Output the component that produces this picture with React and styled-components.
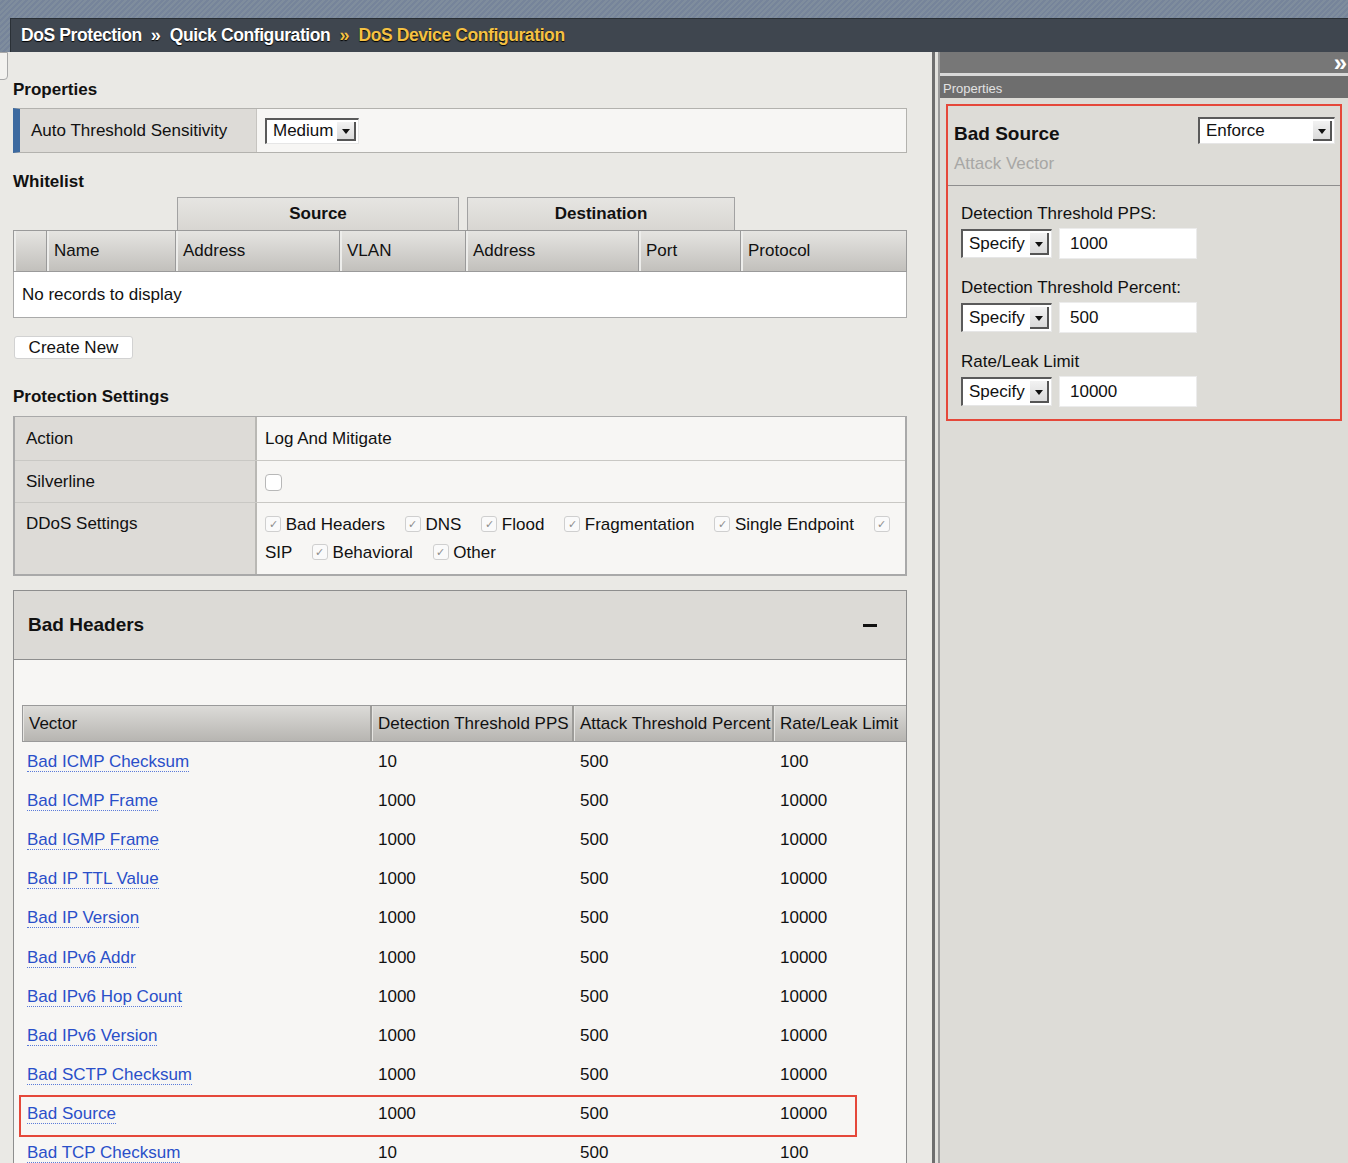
import React from "react";
import styled, { createGlobalStyle } from "styled-components";

const GlobalStyle = createGlobalStyle`
  html, body { margin: 0; padding: 0; }
  body {
    font-family: "Liberation Sans", Arial, sans-serif;
    font-size: 17px;
    color: #111;
    background: #eae9e5;
  }
  * { box-sizing: border-box; }
`;

const vectors = [
  { name: "Bad ICMP Checksum", pps: "10", pct: "500", rate: "100" },
  { name: "Bad ICMP Frame", pps: "1000", pct: "500", rate: "10000" },
  { name: "Bad IGMP Frame", pps: "1000", pct: "500", rate: "10000" },
  { name: "Bad IP TTL Value", pps: "1000", pct: "500", rate: "10000" },
  { name: "Bad IP Version", pps: "1000", pct: "500", rate: "10000" },
  { name: "Bad IPv6 Addr", pps: "1000", pct: "500", rate: "10000" },
  { name: "Bad IPv6 Hop Count", pps: "1000", pct: "500", rate: "10000" },
  { name: "Bad IPv6 Version", pps: "1000", pct: "500", rate: "10000" },
  { name: "Bad SCTP Checksum", pps: "1000", pct: "500", rate: "10000" },
  { name: "Bad Source", pps: "1000", pct: "500", rate: "10000", selected: true },
  { name: "Bad TCP Checksum", pps: "10", pct: "500", rate: "100" },
];

const ddos = ["Bad Headers", "DNS", "Flood", "Fragmentation", "Single Endpoint", "SIP", "Behavioral", "Other"];

const fields = [
  { label: "Detection Threshold PPS:", value: "1000" },
  { label: "Detection Threshold Percent:", value: "500" },
  { label: "Rate/Leak Limit", value: "10000" },
];

export default function App() {
  return (
    <Page>
      <GlobalStyle />
      <Header>
        <Crumbs>
          <span>DoS Protection</span>
          <Sep>»</Sep>
          <span>Quick Configuration</span>
          <Sep $current>»</Sep>
          <Current>DoS Device Configuration</Current>
        </Crumbs>
      </Header>

      <Body>
        <LeftPane>
          <Handle />
          <Heading $top={1} $bottom={8}>Properties</Heading>
          <AutoRow>
            <LabelCell>Auto Threshold Sensitivity</LabelCell>
            <ValueCell>
              <Select $w={94} $h={26}>
                <SelectText>Medium</SelectText>
                <SelectArrow />
              </Select>
            </ValueCell>
          </AutoRow>

          <Heading $top={19} $bottom={5}>Whitelist</Heading>
          <GroupRow>
            <GroupCell $left={164} $w={282}>Source</GroupCell>
            <GroupCell $left={8} $w={268}>Destination</GroupCell>
          </GroupRow>
          <ColHeader>
            <span />
            <span>Name</span>
            <span>Address</span>
            <span>VLAN</span>
            <span>Address</span>
            <span>Port</span>
            <span>Protocol</span>
          </ColHeader>
          <EmptyRow>No records to display</EmptyRow>

          <Button>Create New</Button>

          <Heading $top={28} $bottom={9}>Protection Settings</Heading>
          <SettingsTable>
            <SettingsRow $h={43}>
              <SettingsLabel>Action</SettingsLabel>
              <SettingsValue>Log And Mitigate</SettingsValue>
            </SettingsRow>
            <SettingsRow $h={42}>
              <SettingsLabel>Silverline</SettingsLabel>
              <SettingsValue>
                <EmptyBox />
              </SettingsValue>
            </SettingsRow>
            <SettingsRow $h={72}>
              <SettingsLabel $top>DDoS Settings</SettingsLabel>
              <DdosValue>
                {ddos.map((d, i) => (
                  <React.Fragment key={d}>
                    {i > 0 && " "}
                    <Check $first={i === 0}>✓</Check> {d}
                  </React.Fragment>
                ))}
              </DdosValue>
            </SettingsRow>
          </SettingsTable>

          <Panel>
            <PanelHead>
              <span>Bad Headers</span>
              <Minus />
            </PanelHead>
            <PanelBody>
              <VecHeader>
                <span>Vector</span>
                <span>Detection Threshold PPS</span>
                <span>Attack Threshold Percent</span>
                <span>Rate/Leak Limit</span>
              </VecHeader>
              {vectors.map((v) => (
                <VecRow key={v.name} $selected={v.selected}>
                  <span><VecLink>{v.name}</VecLink></span>
                  <span>{v.pps}</span>
                  <span>{v.pct}</span>
                  <span>{v.rate}</span>
                </VecRow>
              ))}
            </PanelBody>
          </Panel>
        </LeftPane>

        <Divider />

        <RightPane>
          <TopBar>»</TopBar>
          <PropsBand>Properties</PropsBand>
          <RightContent>
            <RedBox>
              <BoxHead>
                <div>
                  <BoxTitle>Bad Source</BoxTitle>
                  <BoxSub>Attack Vector</BoxSub>
                </div>
                <Select $w={137} $h={27}>
                  <SelectText>Enforce</SelectText>
                  <SelectArrow />
                </Select>
              </BoxHead>
              <BoxFields>
                {fields.map((f) => (
                  <Field key={f.label}>
                    <FieldLabel>{f.label}</FieldLabel>
                    <FieldRow>
                      <Select $w={91} $h={29}>
                        <SelectText>Specify</SelectText>
                        <SelectArrow />
                      </Select>
                      <TextInput>{f.value}</TextInput>
                    </FieldRow>
                  </Field>
                ))}
              </BoxFields>
            </RedBox>
          </RightContent>
        </RightPane>
      </Body>
    </Page>
  );
}

const Page = styled.div`
  width: 1348px;
  height: 1163px;
  overflow: hidden;
  display: flex;
  flex-direction: column;
`;

const Header = styled.div`
  flex-shrink: 0;
  padding: 18px 0 0 10px;
  background: repeating-linear-gradient(135deg, #7f8d9d 0 2px, #76849a 2px 4px);
`;

const Crumbs = styled.div`
  height: 34px;
  display: flex;
  align-items: center;
  gap: 9px;
  padding-left: 10px;
  background: #3f464f;
  border-top: 1px solid #2a3036;
  border-left: 1px solid #2a3036;
  color: #fff;
  font-size: 17.5px;
  font-weight: bold;
  letter-spacing: -0.4px;
  text-shadow: 0 1px 1px #000;
`;

const Sep = styled.span`
  color: ${(p) => (p.$current ? "#f5c142" : "#fff")};
  font-size: 18px;
  letter-spacing: 0;
`;

const Current = styled.span`
  color: #f5c142;
`;

const Body = styled.div`
  flex: 1;
  display: flex;
  min-height: 0;
`;

const LeftPane = styled.div`
  position: relative;
  width: 932px;
  padding: 27px 25px 0 13px;
  background: #eae9e5;
  overflow: hidden;
`;

const Handle = styled.div`
  position: absolute;
  left: -4px;
  top: 0;
  width: 12px;
  height: 28px;
  background: #f3f2ef;
  border: 1px solid #a8a8a8;
  border-radius: 0 0 4px 0;
`;

const Heading = styled.div`
  font-weight: bold;
  line-height: 20px;
  margin-top: ${(p) => p.$top}px;
  margin-bottom: ${(p) => p.$bottom}px;
`;

const AutoRow = styled.div`
  display: flex;
  height: 45px;
  border: 1px solid #b3b2ae;
  border-left: 7px solid #3d6aa0;
`;

const LabelCell = styled.div`
  width: 237px;
  display: flex;
  align-items: center;
  padding-left: 11px;
  background: #dddbd7;
  border-right: 1px solid #c6c4c0;
`;

const ValueCell = styled.div`
  flex: 1;
  display: flex;
  align-items: center;
  padding-left: 8px;
  background: #f7f6f4;
`;

const Select = styled.div`
  display: inline-flex;
  flex-shrink: 0;
  width: ${(p) => p.$w}px;
  height: ${(p) => p.$h}px;
  background: #fff;
  border-top: 2px solid #5a5a5a;
  border-left: 2px solid #5a5a5a;
  border-right: 1px solid #e6e6e6;
  border-bottom: 1px solid #e6e6e6;
  font-size: 17px;
  color: #111;
`;

const SelectText = styled.span`
  flex: 1;
  display: flex;
  align-items: center;
  padding-left: 6px;
`;

const SelectArrow = styled.span`
  width: 19px;
  margin: 2px 2px 2px 0;
  display: flex;
  align-items: center;
  justify-content: center;
  background: linear-gradient(#f2f2f2, #dadada);
  border-right: 2px solid #555;
  border-bottom: 2px solid #555;
  &::after {
    content: "";
    border-left: 4px solid transparent;
    border-right: 4px solid transparent;
    border-top: 5px solid #111;
    margin-top: 2px;
  }
`;

const GroupRow = styled.div`
  display: flex;
  height: 33px;
`;

const GroupCell = styled.div`
  width: ${(p) => p.$w}px;
  margin-left: ${(p) => p.$left}px;
  display: flex;
  align-items: center;
  justify-content: center;
  font-weight: bold;
  background: linear-gradient(#e6e5e2, #d8d6d2);
  border: 1px solid #a2a2a2;
  border-bottom: none;
`;

const ColHeader = styled.div`
  display: grid;
  grid-template-columns: 33px 129px 164px 126px 173px 102px 1fr;
  height: 42px;
  border: 1px solid #9a9a9a;
  background: linear-gradient(#e5e4e1, #c2c0bc);
  span {
    display: flex;
    align-items: center;
    padding-left: 7px;
    border-right: 1px solid #9a9a9a;
    box-shadow: inset 2px 0 0 #ededeb;
  }
  span:last-child { border-right: none; }
`;

const EmptyRow = styled.div`
  height: 46px;
  display: flex;
  align-items: center;
  padding-left: 8px;
  background: #fff;
  border: 1px solid #aaa;
  border-top: none;
`;

const Button = styled.div`
  margin: 18px 0 0 1px;
  height: 23px;
  width: 119px;
  display: flex;
  align-items: center;
  justify-content: center;
  background: #fff;
  border: 1px solid #d2d2d2;
  border-radius: 3px;
`;

const SettingsTable = styled.div`
  border: 2px solid #a9a9a9;
  border-top-width: 1px;
`;

const SettingsRow = styled.div`
  display: flex;
  height: ${(p) => p.$h}px;
  border-top: 1px solid #c9c8c4;
  &:first-child { border-top: none; }
`;

const SettingsLabel = styled.div`
  width: 242px;
  padding: ${(p) => (p.$top ? "11px" : "0")} 11px 0;
  display: flex;
  align-items: ${(p) => (p.$top ? "flex-start" : "center")};
  background: #dddbd7;
  border-right: 2px solid #b9b8b4;
`;

const SettingsValue = styled.div`
  flex: 1;
  display: flex;
  align-items: center;
  padding: 0 8px;
  background: #f7f6f4;
`;

const DdosValue = styled.div`
  flex: 1;
  padding: 8px 8px 0 8px;
  line-height: 28px;
  background: #f7f6f4;
`;

const EmptyBox = styled.span`
  display: inline-block;
  width: 17px;
  height: 17px;
  margin-top: 2px;
  background: #fff;
  border: 1px solid #b8b8b8;
  border-radius: 4px;
`;

const Check = styled.span`
  display: inline-block;
  width: 16px;
  height: 16px;
  margin-left: ${(p) => (p.$first ? 0 : 15)}px;
  vertical-align: middle;
  margin-top: -3px;
  text-align: center;
  font-size: 11px;
  line-height: 15px;
  color: #8d8d8d;
  background: #fafafa;
  border: 1px solid #cfcfcf;
  border-radius: 3px;
`;

const Panel = styled.div`
  margin-top: 14px;
  min-height: 600px;
  border: 1px solid #8e8e8e;
  border-bottom: none;
  background: #f7f6f4;
`;

const PanelHead = styled.div`
  height: 69px;
  display: flex;
  align-items: center;
  justify-content: space-between;
  padding: 0 29px 0 14px;
  background: #dcdad6;
  border-bottom: 1px solid #8e8e8e;
  font-size: 19px;
  font-weight: bold;
`;

const Minus = styled.span`
  width: 14px;
  height: 3px;
  background: #111;
`;

const PanelBody = styled.div`
  padding: 45px 0 0 8px;
`;

const vecCols = "349px 202px 200px 1fr";

const VecHeader = styled.div`
  display: grid;
  grid-template-columns: ${vecCols};
  height: 37px;
  border: 1px solid #9a9a9a;
  border-right: none;
  background: linear-gradient(#dcdbd8, #b7b5b1);
  span {
    display: flex;
    align-items: center;
    padding-left: 6px;
    border-right: 2px solid #9c9b98;
    box-shadow: inset 1px 0 0 #e6e5e2;
    white-space: nowrap;
  }
  span:last-child { border-right: none; }
`;

const VecRow = styled.div`
  position: relative;
  display: grid;
  grid-template-columns: ${vecCols};
  height: 39.2px;
  span {
    display: flex;
    align-items: center;
    padding-left: 5px;
  }
  span + span { padding-left: 7px; }
  &::after {
    content: "";
    display: ${(p) => (p.$selected ? "block" : "none")};
    position: absolute;
    left: -3px;
    right: 49px;
    top: 0;
    bottom: -3px;
    border: 2px solid #e5483a;
    pointer-events: none;
  }
`;

const VecLink = styled.a`
  color: #2a4fc9;
  text-decoration: none;
  border-bottom: 1px dotted #5b7bd9;
  line-height: 19px;
`;

const Divider = styled.div`
  width: 8px;
  flex-shrink: 0;
  background: linear-gradient(to right, #6e6e6e 0 3px, #e2e1dd 3px 6px, #9a9a9a 6px 8px);
`;

const RightPane = styled.div`
  flex: 1;
  display: flex;
  flex-direction: column;
  background: #dddcd7;
`;

const TopBar = styled.div`
  height: 24px;
  flex-shrink: 0;
  display: flex;
  align-items: center;
  justify-content: flex-end;
  padding-right: 1px;
  background: #777;
  border-bottom: 3px solid #d9d9d9;
  color: #fff;
  font-weight: bold;
  font-size: 24px;
  line-height: 1;
`;

const PropsBand = styled.div`
  height: 22px;
  flex-shrink: 0;
  display: flex;
  align-items: center;
  padding: 2px 0 0 3px;
  background: #6e6e6e;
  color: #e2e2e2;
  font-size: 13px;
`;

const RightContent = styled.div`
  padding: 6px 6px 0 6px;
`;

const RedBox = styled.div`
  border: 2px solid #e5483a;
`;

const BoxHead = styled.div`
  display: flex;
  justify-content: space-between;
  align-items: flex-start;
  padding: 11px 5px 0 6px;
  height: 80px;
  border-bottom: 1px solid #8e8e8e;
`;

const BoxTitle = styled.div`
  font-size: 19px;
  font-weight: bold;
  line-height: 24px;
  margin-top: 5px;
`;

const BoxSub = styled.div`
  color: #a7a7a5;
  line-height: 24px;
  margin-top: 6px;
`;

const BoxFields = styled.div`
  padding: 18px 13px 12px;
  display: flex;
  flex-direction: column;
  gap: 19px;
`;

const Field = styled.div`
  display: flex;
  flex-direction: column;
  gap: 5px;
`;

const FieldLabel = styled.div`
  line-height: 20px;
`;

const FieldRow = styled.div`
  display: flex;
  gap: 7px;
`;

const TextInput = styled.div`
  width: 138px;
  height: 31px;
  margin-top: -1px;
  display: flex;
  align-items: center;
  padding-left: 10px;
  background: #fff;
  border: 1px solid #ececec;
`;
